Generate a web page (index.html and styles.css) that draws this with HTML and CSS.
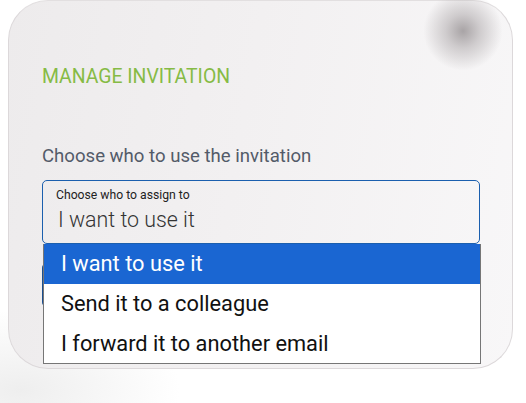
FILE: index.html
```html
<!DOCTYPE html>
<html>
<head>
<meta charset="utf-8">
<link rel="stylesheet" href="styles.css">
</head>
<body>
<div class="page">
  <div class="card">
    <div class="blob"></div>
    <h1 class="title">MANAGE INVITATION</h1>
    <p class="prompt">Choose who to use the invitation</p>
    <div class="field">
      <div class="select">
        <span class="select-label">Choose who to assign to</span>
        <span class="select-value">I want to use it</span>
      </div>
      <ul class="options">
        <li class="option active">I want to use it</li>
        <li class="option">Send it to a colleague</li>
        <li class="option">I forward it to another email</li>
      </ul>
    </div>
    <div class="button"></div>
  </div>
</div>
</body>
</html>
```

FILE: styles.css
```css
html, body {
  margin: 0;
  padding: 0;
  background: #ffffff;
}
body {
  width: 526px;
  height: 403px;
  overflow: hidden;
  font-family: Roboto, "Liberation Sans", sans-serif;
  background: radial-gradient(ellipse 160px 80px at 20px 390px, #eeeeee 0%, rgba(255,255,255,0) 100%), #ffffff;
}
.page {
  padding-left: 8px;
}
.card {
  position: relative;
  box-sizing: border-box;
  width: 505px;
  height: 369px;
  border: 1px solid #dcd8da;
  border-top-color: #e2dfe0;
  border-radius: 40px;
  background: linear-gradient(100deg, #edebec 0%, #f2f0f1 45%, #f8f7f8 100%);
  padding: 64px 32px 0 33px;
}
.blob {
  position: absolute;
  left: 414px;
  top: -10px;
  width: 80px;
  height: 80px;
  border-radius: 50%;
  background: radial-gradient(circle, rgba(160,155,157,0.9) 0%, rgba(175,170,172,0.55) 30%, rgba(240,238,239,0) 70%);
}
.title {
  margin: 0;
  font-size: 19.4px;
  line-height: 24px;
  font-weight: 400;
  color: #86bb45;
}
.prompt {
  margin: 55px 0 0;
  font-size: 18.6px;
  line-height: 24px;
  color: #535b69;
}
.field {
  position: relative;
  margin-top: 12px;
}
.select {
  box-sizing: border-box;
  height: 64px;
  border: 1px solid #1b5fae;
  border-radius: 5px;
  padding: 7px 0 0 13px;
  display: flex;
  flex-direction: column;
}
.select-label {
  font-size: 12.2px;
  line-height: 15px;
  color: #222222;
}
.select-value {
  font-size: 21.4px;
  line-height: 30px;
  font-weight: 300;
  color: #333333;
  padding-left: 2px;
  padding-top: 2px;
}
.options {
  position: absolute;
  left: 1px;
  top: 64px;
  width: 438px;
  box-sizing: border-box;
  margin: 0;
  padding: 0;
  list-style: none;
  background: #ffffff;
  border: 1px solid #767676;
  border-top: none;
  z-index: 2;
}
.option {
  height: 39.5px;
  line-height: 39px;
  padding-left: 17px;
  font-size: 21.8px;
  color: #111111;
}
.option.active {
  height: 40px;
  background: #1a66d2;
  color: #ffffff;
}
.button {
  margin-top: 20px;
  height: 42px;
  width: 439px;
  border-radius: 4px;
  background: #1b4f8f;
}
```
